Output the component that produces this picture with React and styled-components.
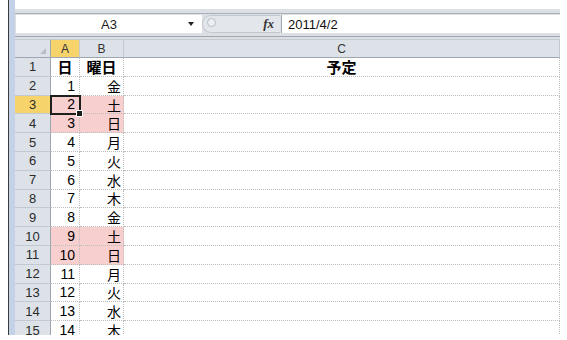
import React from 'react';
import styled, { createGlobalStyle, css } from 'styled-components';

const GlobalStyle = createGlobalStyle`
  body {
    margin: 0;
    background: #fff;
    font-family: "Liberation Sans", "Noto Sans CJK JP", sans-serif;
  }
`;

const HEAD_BG = '#dde2e9';
const SELECT_BG = '#f7d36c';
const WEEKEND_BG = '#f8cfcf';

const Window = styled.div`
  display: flex;
  width: 560px;
  height: 335px;
  padding-left: 8px;
  box-sizing: border-box;
  overflow: hidden;
`;

const SideStrip = styled.div`
  width: 6px;
  flex: none;
  border-left: 1px solid #3b3b3b;
  background: #c4d2e7;
`;

const Main = styled.div`
  flex: 1;
  min-width: 0;
  display: flex;
  flex-direction: column;
`;

const FormulaBar = styled.div`
  margin-top: 9px;
  height: 30px;
  box-sizing: border-box;
  padding: 6px 0 6px 1px;
  display: flex;
  background: #dcdfe4;
  box-shadow: inset 0 4px 0 #dcdfe4, inset 0 5px 0 #aab0b9,
    inset 0 -2px 0 #dcdfe4, inset 0 -3px 0 #9fa7b3;
`;

const NameBox = styled.div`
  width: 186px;
  display: flex;
  align-items: center;
  background: #fff;
`;

const NameText = styled.span`
  flex: 1;
  text-align: center;
  font-size: 13px;
  color: #1a1a1a;
  padding-left: 14px;
`;

const DropArrow = styled.span`
  width: 0;
  height: 0;
  margin-right: 8px;
  border-top: 4px solid #222;
  border-left: 3px solid transparent;
  border-right: 3px solid transparent;
`;

const FxArea = styled.div`
  width: 78px;
  display: flex;
  align-items: center;
  justify-content: space-between;
  padding: 0 6px 0 4px;
  box-sizing: border-box;
  border: 1px solid #c3c8cf;
  border-right: none;
  border-radius: 10px 0 0 10px;
  background: #e3e6eb;
`;

const Knob = styled.span`
  width: 7px;
  height: 7px;
  border-radius: 50%;
  border: 1px solid #b6bcc5;
  background: #eef0f3;
  margin-top: -3px;
`;

const FxLabel = styled.span`
  font-family: "Liberation Serif", serif;
  font-style: italic;
  font-weight: bold;
  font-size: 13px;
  color: #333;
`;

const FormulaInput = styled.div`
  flex: 1;
  display: flex;
  align-items: center;
  padding-left: 6px;
  margin-left: 1px;
  background: #fff;
  border-left: 1px solid #a7adb6;
  font-size: 13px;
  color: #111;
`;

const Sheet = styled.div`
  display: grid;
  grid-template-columns: 36px 29px 44px 1fr;
  grid-template-rows: 19px;
  grid-auto-rows: 18.8px;
`;

const ColHead = styled.div`
  display: flex;
  align-items: center;
  justify-content: center;
  font-size: 12px;
  color: #333;
  background: ${(p) => (p.$selected ? SELECT_BG : HEAD_BG)};
  border-right: 1px solid #c3c9d1;
  border-bottom: 1px solid #9ea6b1;
  border-top: 1px solid #c5cad1;
`;

const Corner = styled(ColHead)`
  position: relative;
  border-right-color: #9ea6b1;

  &::after {
    content: '';
    position: absolute;
    right: 4px;
    bottom: 3px;
    border-bottom: 6px solid #b9bec6;
    border-left: 6px solid transparent;
  }
`;

const RowHead = styled.div`
  display: flex;
  align-items: center;
  justify-content: center;
  font-size: 13px;
  color: #2b2b2b;
  background: ${(p) => (p.$selected ? SELECT_BG : HEAD_BG)};
  border-right: 1px solid #9ea6b1;
  border-bottom: 1px solid #c3c9d1;
`;

const Cell = styled.div`
  position: relative;
  display: flex;
  align-items: center;
  justify-content: ${(p) => p.$align || 'flex-end'};
  padding-right: ${(p) => (p.$align === 'center' ? 0 : p.$pad || 4)}px;
  font-size: 14px;
  color: #000;
  background: ${(p) => (p.$weekend ? WEEKEND_BG : '#fff')};
  border-right: 1px dotted #bdbdbd;
  border-bottom: 1px dotted #bdbdbd;
  ${(p) =>
    p.$bold &&
    css`
      font-weight: bold;
      font-size: 15px;
    `}
`;

const SelectionFrame = styled.div`
  position: absolute;
  left: -1px;
  top: -1px;
  right: -2px;
  bottom: -2px;
  z-index: 2;
  border: 2px solid #1c1f1c;

  &::after {
    content: '';
    position: absolute;
    right: -4px;
    bottom: -4px;
    width: 5px;
    height: 5px;
    background: #1c1f1c;
    border: 1px solid #fff;
  }
`;

const DAYS = ['金', '土', '日', '月', '火', '水', '木'];

const rows = Array.from({ length: 14 }, (_, i) => {
  const day = DAYS[i % 7];
  return { row: i + 2, num: i + 1, day, weekend: day === '土' || day === '日' };
});

export default function App() {
  return (
    <>
      <GlobalStyle />
      <Window>
        <SideStrip />
        <Main>
          <FormulaBar>
            <NameBox>
              <NameText>A3</NameText>
              <DropArrow />
            </NameBox>
            <FxArea>
              <Knob />
              <FxLabel>fx</FxLabel>
            </FxArea>
            <FormulaInput>2011/4/2</FormulaInput>
          </FormulaBar>

          <Sheet>
            <Corner />
            <ColHead $selected>A</ColHead>
            <ColHead>B</ColHead>
            <ColHead>C</ColHead>

            <RowHead>1</RowHead>
            <Cell $align="center" $bold>日</Cell>
            <Cell $align="center" $bold>曜日</Cell>
            <Cell $align="center" $bold>予定</Cell>

            {rows.map((r) => (
              <React.Fragment key={r.row}>
                <RowHead $selected={r.row === 3}>{r.row}</RowHead>
                <Cell $weekend={r.weekend}>
                  {r.num}
                  {r.row === 3 && <SelectionFrame />}
                </Cell>
                <Cell $weekend={r.weekend} $pad={2}>{r.day}</Cell>
                <Cell />
              </React.Fragment>
            ))}
          </Sheet>
        </Main>
      </Window>
    </>
  );
}
